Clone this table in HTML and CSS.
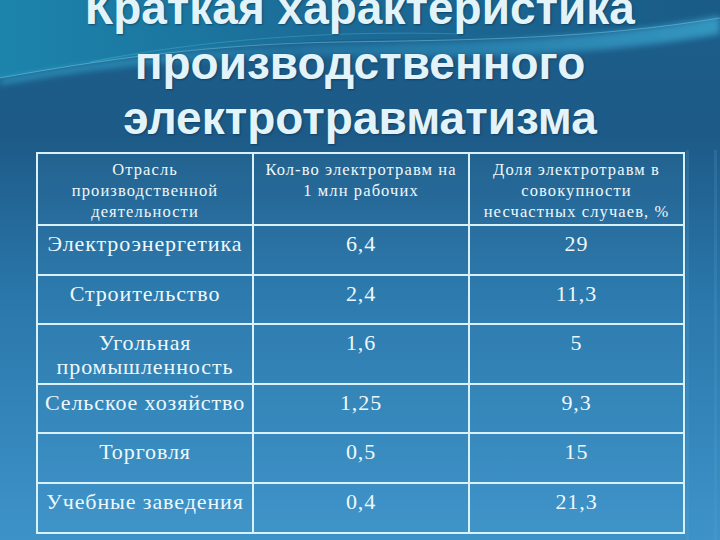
FILE: index.html
```html
<!DOCTYPE html>
<html lang="ru">
<head>
<meta charset="utf-8">
<title>Краткая характеристика производственного электротравматизма</title>
<link rel="stylesheet" href="styles.css">
</head>
<body>
<div class="slide">
  <svg class="bg" viewBox="0 0 720 540" preserveAspectRatio="none" aria-hidden="true">
    <defs>
      <linearGradient id="base" x1="0" y1="0" x2="0" y2="1">
        <stop offset="0" stop-color="#1b5e8a"/>
        <stop offset="0.25" stop-color="#1d5a87"/>
        <stop offset="0.55" stop-color="#2a77ab"/>
        <stop offset="1" stop-color="#3d93c8"/>
      </linearGradient>
      <linearGradient id="top" x1="0" y1="0" x2="1" y2="0">
        <stop offset="0" stop-color="#1c84ab"/>
        <stop offset="0.45" stop-color="#1b6c97"/>
        <stop offset="1" stop-color="#1a5b87"/>
      </linearGradient>
      <linearGradient id="sweep" x1="0" y1="0" x2="1" y2="0">
        <stop offset="0" stop-color="#35b6da" stop-opacity="0.8"/>
        <stop offset="0.4" stop-color="#2a92bf" stop-opacity="0.4"/>
        <stop offset="1" stop-color="#3fb0d8" stop-opacity="0.7"/>
      </linearGradient>
      <filter id="blur"><feGaussianBlur stdDeviation="3"/></filter>
    </defs>
    <rect width="720" height="540" fill="url(#base)"/>
    <path d="M0 0 H720 V18 C600 40 470 36 340 40 C220 44 110 58 0 78 Z" fill="url(#top)"/>
    <path d="M0 80 C90 62 200 46 330 44 C470 42 600 40 720 16 V34 C600 56 470 58 340 56 C210 56 100 66 0 84 Z" fill="url(#sweep)" filter="url(#blur)"/>
    <path d="M0 78 C100 60 210 44 340 42 C480 40 600 38 720 18" fill="none" stroke="#7fd6ee" stroke-width="1" opacity="0.45"/>
    <path d="M90 62 C200 40 330 30 460 34" fill="none" stroke="#5fc8e6" stroke-width="1" opacity="0.3"/>
    <rect x="686" y="150" width="3" height="390" fill="#5aa6d2" opacity="0.2"/>
    <rect x="714" y="150" width="3" height="390" fill="#5aa6d2" opacity="0.2"/>
  </svg>
  <div class="content">
    <h1 class="title">Краткая характеристика<br>производственного<br>электротравматизма</h1>
    <table class="stats">
      <colgroup>
        <col class="c1"><col class="c2"><col class="c3">
      </colgroup>
      <thead>
        <tr class="head">
          <th>Отрасль<br>производственной<br>деятельности</th>
          <th>Кол-во электротравм на<br>1 млн рабочих</th>
          <th>Доля электротравм в<br>совокупности<br>несчастных случаев, %</th>
        </tr>
      </thead>
      <tbody>
        <tr class="r50"><td>Электроэнергетика</td><td>6,4</td><td>29</td></tr>
        <tr class="r49"><td>Строительство</td><td>2,4</td><td>11,3</td></tr>
        <tr class="r60"><td>Угольная<br>промышленность</td><td>1,6</td><td>5</td></tr>
        <tr class="r49"><td>Сельское хозяйство</td><td>1,25</td><td>9,3</td></tr>
        <tr class="r50"><td>Торговля</td><td>0,5</td><td>15</td></tr>
        <tr class="r50"><td>Учебные заведения</td><td>0,4</td><td>21,3</td></tr>
      </tbody>
    </table>
  </div>
</div>
</body>
</html>
```
FILE: styles.css
```css
html, body {
  margin: 0;
  padding: 0;
  background: #1b5e8a;
}
.slide {
  position: relative;
  width: 720px;
  height: 540px;
  overflow: hidden;
  box-shadow: inset 2px 0 0 #17496e, inset 0 -4px 0 #153c5c;
}
.bg {
  position: absolute;
  left: 0;
  top: 0;
  width: 720px;
  height: 540px;
  z-index: 0;
}
.content {
  position: relative;
  z-index: 1;
  display: flex;
  flex-direction: column;
}
.title {
  margin: -19px 0 0 0;
  font-family: "Liberation Sans", Arial, sans-serif;
  font-weight: bold;
  font-size: 46px;
  line-height: 55px;
  text-align: center;
  color: #e2f4fa;
  text-shadow: 1px 1px 2px rgba(8, 40, 70, 0.55);
}
.stats {
  margin: 6px 0 0 36px;
  width: 647px;
  border-collapse: collapse;
  table-layout: fixed;
  background: rgba(120, 200, 240, 0.05);
  color: #eef8fb;
  font-family: "Liberation Serif", "Times New Roman", serif;
}
.c1 { width: 216px; }
.c2 { width: 216px; }
.c3 { width: 215px; }
.stats th, .stats td {
  border: 2px solid #d9f1fa;
  text-align: center;
  vertical-align: top;
  white-space: nowrap;
  padding: 0;
}
.stats th {
  font-weight: normal;
  font-size: 16.5px;
  line-height: 21px;
  letter-spacing: 1.1px;
  padding-top: 5px;
}
.stats td {
  font-size: 22px;
  line-height: 24px;
  letter-spacing: 0.9px;
  padding-top: 6px;
}
.head { height: 72px; }
.r50 { height: 50px; }
.r49 { height: 49px; }
.r60 { height: 60px; }
```
